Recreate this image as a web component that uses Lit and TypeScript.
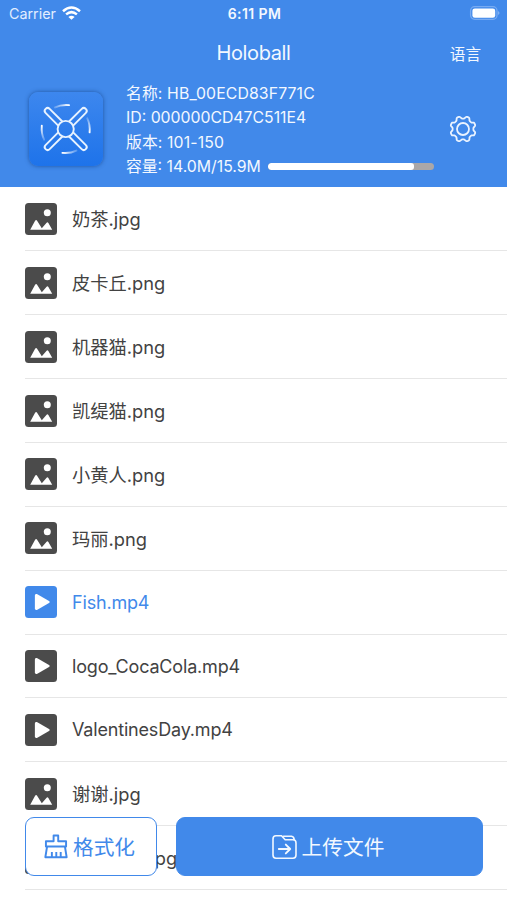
import { LitElement, html, svg, css } from "lit";
import { customElement, property } from "lit/decorators.js";

type Kind = "image" | "video";
interface FileItem {
  name: string;
  kind: Kind;
  active?: boolean;
}

const files: FileItem[] = [
  { name: "奶茶.jpg", kind: "image" },
  { name: "皮卡丘.png", kind: "image" },
  { name: "机器猫.png", kind: "image" },
  { name: "凯缇猫.png", kind: "image" },
  { name: "小黄人.png", kind: "image" },
  { name: "玛丽.png", kind: "image" },
  { name: "Fish.mp4", kind: "video", active: true },
  { name: "logo_CocaCola.mp4", kind: "video" },
  { name: "ValentinesDay.mp4", kind: "video" },
  { name: "谢谢.jpg", kind: "image" },
  { name: "生日快乐.jpg", kind: "image" },
];

@customElement("file-row")
class FileRow extends LitElement {
  @property({ attribute: false }) item!: FileItem;

  static styles = css`
    :host { display: block; padding-left: 25px; }
    .row {
      display: flex; align-items: center; gap: 15px;
      height: 63.88px; box-sizing: border-box;
      border-bottom: 1px solid #e6e6e6; color: #4b4b4b;
    }
    .icon { width: 32px; height: 32px; flex: none; display: block; }
    .name { font-size: 18.3px; line-height: 28px; padding-top: 1px; white-space: nowrap; color: #424242; }
    .video .name { font-size: 18px; letter-spacing: -.18px; }
    .active, .active .name { color: #4189ea; }
  `;

  render() {
    const glyph = this.item.kind === "image"
      ? svg`<circle cx="22.3" cy="9.8" r="3.5" fill="#fff"/>
            <path d="M5.2 26.8 L10.1 17.8 Q11.1 16.3 12.1 17.8 L16.8 25.2 L21.4 19.9 Q22.5 18.7 23.4 20 L27.2 26.8Z" fill="#fff"/>`
      : svg`<path d="M9.9 9.4 Q10.1 7.5 11.9 8.1 L24 14.9 Q25.7 16 24 17.1 L11.9 23.9 Q10.1 24.6 9.9 22.6Z" fill="#fff"/>`;
    return html`
      <div class="row ${this.item.kind} ${this.item.active ? "active" : ""}">
        <svg class="icon" viewBox="0 0 32 32">
          <rect width="32" height="32" rx="3.5" fill="currentColor"/>${glyph}
        </svg>
        <span class="name">${this.item.name}</span>
      </div>`;
  }
}

/* Eight-toothed gear outline around the given centre. */
function gearPath(c: number, outer: number, inner: number): string {
  const points: string[] = [];
  for (let i = 0; i < 96; i++) {
    const a = (i / 96) * Math.PI * 2;
    const wave = Math.tanh(2.2 * Math.cos(8 * a)) / Math.tanh(2.2);
    const r = (outer + inner) / 2 + ((outer - inner) / 2) * wave;
    points.push(`${(c + r * Math.sin(a)).toFixed(2)} ${(c - r * Math.cos(a)).toFixed(2)}`);
  }
  return `M${points.join("L")}Z`;
}

@customElement("app-root")
class AppRoot extends LitElement {
  static styles = css`
    :host {
      display: block; position: relative; height: 900px; overflow: hidden;
      background: #fff; font-family: Inter, "Noto Sans CJK SC", sans-serif;
    }
    .header { height: 186.6px; background: #4189ea; color: #f3f8ff; display: flex; flex-direction: column; }
    .status {
      height: 28px; display: grid; grid-template-columns: 1fr auto 1fr; align-items: center;
      padding: 0 7px 0 9px;
    }
    .carrier { display: flex; align-items: center; gap: 6px; font-size: 14.3px; line-height: 18px; color: #e2edff; }
    .carrier span { margin-top: -1px; }
    .wifi { width: 19px; height: 14px; display: block; margin-top: -2px; }
    .clock { font-size: 14px; line-height: 18px; font-weight: 600; letter-spacing: .4px; margin-top: -1px; }
    .battery { width: 31px; height: 14px; justify-self: end; display: block; margin-top: -2px; }
    .nav {
      height: 50px; display: grid; grid-template-columns: 1fr auto 1fr; align-items: center;
      padding: 0 26px; 
    }
    .title { grid-column: 2; font-size: 20px; letter-spacing: -.4px; }
    .lang { justify-self: end; font-size: 15.6px; line-height: 20px; padding-top: 3px; }
    .device { display: flex; align-items: center; height: 108.6px; padding: 0 30px 0 29px; }
    .logo {
      width: 74px; height: 74px; box-sizing: border-box; border-radius: 9px; flex: none; margin-top: -6px;
      background: linear-gradient(#3d87ee, #1e73ea); box-shadow: 0 0 4px rgba(20, 65, 135, .75);
    }
    .logo svg { display: block; width: 74px; height: 74px; }
    .info { margin-left: 23px; width: 308px; margin-top: -3px; }
    .line { height: 24.5px; line-height: 24.5px; display: flex; align-items: center; font-size: 15.8px; white-space: nowrap; }
    .spaced { letter-spacing: .12px; }
    .bar { width: 166px; height: 6.5px; border-radius: 4px; background: #aaa7a8; margin-left: 7px; margin-top: -2px; overflow: hidden; }
    .fill { height: 100%; background: #fff; border-radius: 3px; }
    .gear { width: 28px; height: 28px; margin-left: 15px; margin-top: -6px; flex: none; }
    .list { padding-top: .9px; }
    .actions { position: absolute; left: 25px; right: 24px; top: 817px; height: 59px; display: flex; gap: 19px; }
    .button {
      box-sizing: border-box; border-radius: 9px; display: flex; align-items: center; justify-content: center;
      font-size: 20.7px; line-height: 30px; border: 1px solid #4189ea; white-space: nowrap;
    }
    .format { width: 132px; background: #fff; color: #4189ea; gap: 5px; padding-right: 3px; }
    .upload { flex: 1; background: #4189ea; color: #f2f8ff; gap: 5px; padding-right: 3px; }
    .button span { padding-top: 2px; }
    .tool { width: 25px; height: 26px; display: block; }
    .format .tool { width: 24px; height: 25px; }
  `;

  render() {
    const used = 0.878;
    return html`
      <div class="header">
        <div class="status">
          <div class="carrier"><span>Carrier</span>
            <svg class="wifi" viewBox="0 0 19 14" fill="none" stroke="#fff" stroke-width="2.5">
              <path d="M1 5.2Q9.5 -2.3 18 5.2"/><path d="M4.1 8.4Q9.5 3.8 14.9 8.4"/>
              <path d="M6.4 10.9Q9.5 8.4 12.6 10.9L9.5 13.7Z" fill="#fff" stroke="none"/>
            </svg>
          </div>
          <div class="clock">6:11 PM</div>
          <svg class="battery" viewBox="0 0 31 14">
            <rect x="1.6" y=".7" width="26.4" height="12.6" rx="4" fill="none" stroke="#78abf2" stroke-width="1.3"/>
            <rect x="3.4" y="2.4" width="22.8" height="9.4" rx="2.4" fill="#fff"/>
            <path d="M29.2 5Q31.7 7 29.2 9Z" fill="#8eb9f5"/>
          </svg>
        </div>
        <div class="nav"><span class="title">Holoball</span><span class="lang">语言</span></div>
        <div class="device">
          <div class="logo">
            <svg viewBox="0 0 74 74" fill="none" stroke="#e8f3ff" stroke-width="1.9" stroke-linecap="round">
              <defs>
                <linearGradient id="fade"><stop offset="0" stop-color="#fff" stop-opacity=".25"/><stop offset="1" stop-color="#fff"/></linearGradient>
              </defs>
              ${[45, 135, 225, 315].map((a) => svg`<g transform="rotate(${a} 36.7 37)">
                <path d="M33.8 29V11.4Q33.8 8.6 36.7 8.6Q39.6 8.6 39.6 11.4V29"/></g>`)}
              ${[0, 90, 180, 270].map((a) => svg`<g transform="rotate(${a} 36.7 37)">
                <path d="M26 15.4Q32 12.4 40 13.1" stroke="url(#fade)"/></g>`)}
              <circle cx="36.7" cy="37" r="8.1"/>
            </svg>
          </div>
          <div class="info">
            <div class="line spaced">名称: HB_00ECD83F771C</div>
            <div class="line">ID: 000000CD47C511E4</div>
            <div class="line spaced">版本: 101-150</div>
            <div class="line">容量: 14.0M/15.9M
              <div class="bar"><div class="fill" style="width:${used * 100}%"></div></div>
            </div>
          </div>
          <svg class="gear" viewBox="0 0 28 28" fill="none" stroke="#eaf3ff" stroke-width="1.8" stroke-linejoin="round">
            <path d=${gearPath(14, 12.8, 10.4)} transform="rotate(22.5 14 14)"/><circle cx="14" cy="14" r="6"/>
          </svg>
        </div>
      </div>
      <div class="list">${files.map((f) => html`<file-row .item=${f}></file-row>`)}</div>
      <div class="actions">
        <div class="button format">
          <svg class="tool" viewBox="0 0 25 26" fill="none" stroke="currentColor" stroke-width="2" stroke-linejoin="round">
            <path d="M2 13V7.6H10V1.5H14.8V7.6H23V13Z"/>
            <path d="M3.2 13L1.4 24.2H23.6L21.8 13M8.2 24V18.6M12.8 24V18.6M17.4 24V18.6"/>
          </svg><span>格式化</span>
        </div>
        <div class="button upload">
          <svg class="tool" viewBox="0 0 25 26" fill="none" stroke="currentColor" stroke-width="1.6" stroke-linejoin="round" stroke-linecap="round">
            <path d="M4 1.8H9.5L13.2 5.8H21Q24 5.8 24 9V21Q24 24.2 21 24.2H4Q1 24.2 1 21V5Q1 1.8 4 1.8Z"/>
            <path d="M11.5 2.2H19.5Q22 2.5 22.2 5.8"/>
            <path d="M6.8 15H18.2M13.8 10.6L18.2 15L13.8 19.4" stroke-width="1.9"/>
          </svg><span>上传文件</span>
        </div>
      </div>`;
  }
}
